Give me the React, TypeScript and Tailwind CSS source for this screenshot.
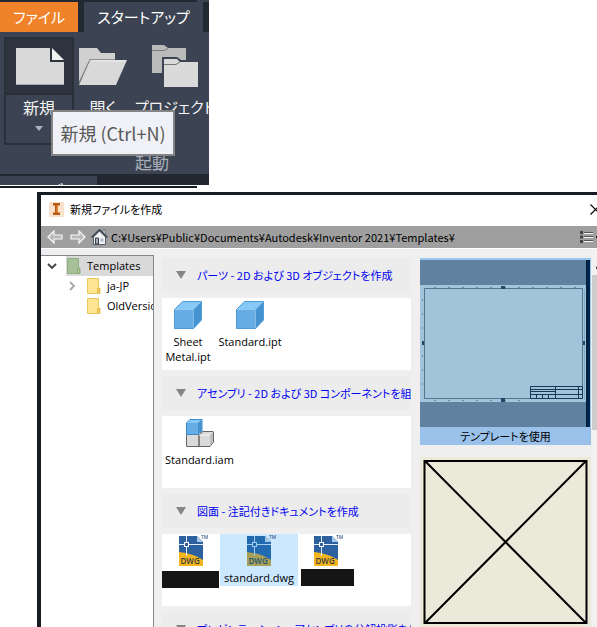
import type { ReactNode } from "react";

const JP = "font-['Noto_Sans_CJK_JP',sans-serif] [font-feature-settings:'palt']";
const LATIN = "font-['Open_Sans','Noto_Sans_CJK_JP',sans-serif]";

function NewIcon() {
  return (
    <svg width="48" height="37" viewBox="0 0 48 37" aria-hidden="true">
      <path d="M0 0H34V14H48V37H0Z" fill="#d9d9d9" />
      <path d="M36 0L48 12H36Z" fill="#f3f3f3" />
      <path d="M0 36.5H48" stroke="#ababab" />
    </svg>
  );
}

function OpenIcon() {
  return (
    <svg width="48" height="37" viewBox="0 0 48 37" aria-hidden="true">
      <path d="M0 0H18L22 5H36V11H11L0 34Z" fill="#d0d0d0" />
      <path d="M11 12H48L37 37H0Z" fill="#d9d9d9" />
      <path d="M36 11.5H11L0 35" fill="none" stroke="#8b8e92" />
      <path d="M12 13H47" stroke="#efefef" />
    </svg>
  );
}

function ProjectIcon() {
  return (
    <svg width="46" height="42" viewBox="0 0 46 42" aria-hidden="true">
      <path d="M0 0H12L16 3H34V28H0Z" fill="#bababa" />
      <path d="M0 5.500H12L16 3.500" fill="none" stroke="#777" />
      <path d="M10 12H25L29 15H46V42H10Z" fill="#3c4453" />
      <path d="M12 14H25L28 17H46V42H12Z" fill="#dadada" />
      <path d="M12 19.500H24L28 17" fill="none" stroke="#777" />
    </svg>
  );
}

function Ribbon() {
  return (
    <section className={`relative w-[209px] shrink-0 overflow-hidden bg-[#3c4453] ${JP}`}>
      <div className="h-[2px] w-[197px] bg-[#222831]" />
      <nav className="flex h-[30px] bg-[#222831] text-[15px] leading-[30px] text-white">
        <button className="w-[78px] bg-[#f08229] text-center">ファイル</button>
        <button className="ml-[6px] w-[119px] bg-[#3c4453] text-center">スタートアップ</button>
      </nav>
      <div className="flex h-[120px] pt-[5px] text-[16px] text-[#f5f5f5]">
        <button className="ml-[4px] flex h-[108px] w-[70px] shrink-0 flex-col items-center border-2 border-[#29303a]">
          <span className="flex h-[56px] w-full items-center justify-center border-b-2 border-[#29303a] bg-[#2d343f] pl-[2px]">
            <NewIcon />
          </span>
          <span className="leading-[24px]">新規</span>
          <svg className="mt-[7px]" width="8" height="5" aria-hidden="true">
            <path d="M0 0H8L4 5Z" fill="#a9b5c3" />
          </svg>
        </button>
        <button className="ml-[5px] flex w-[48px] shrink-0 flex-col items-center pt-[11px]">
          <OpenIcon />
          <span className="mt-[10px] leading-[24px]">開く</span>
        </button>
        <button className="ml-[8px] flex w-[80px] shrink-0 flex-col items-center pt-[8px] text-[15px]">
          <ProjectIcon />
          <span className="mt-[8px] whitespace-nowrap leading-[24px]">プロジェクト</span>
        </button>
      </div>
      <div className="h-[22px] pl-[95px] text-center text-[17px] leading-[20px] text-[#a9afb9]">起動</div>
      <div className="h-[11px] overflow-hidden bg-[#222831] pt-[2px]">
        <div className="h-full w-[97px] overflow-hidden bg-[#3c4453] pl-[16px] pt-[4px] text-center text-[16px] leading-[16px] text-white">
          ベ
        </div>
      </div>
      <div
        role="tooltip"
        className={`absolute left-[51px] top-[110px] flex h-[46px] w-[124px] items-center justify-center whitespace-nowrap border-2 border-[#848484] bg-[#f0f1f6] text-[18px] text-[#595959] ${JP}`}
      >
        新規 (Ctrl+N)
      </div>
    </section>
  );
}

function Arrow({ flip = false }: { flip?: boolean }) {
  return (
    <svg width="16" height="16" viewBox="0 0 16 16" className={flip ? "-scale-x-100" : ""} aria-hidden="true">
      <path d="M1 8L7 2V6H15V10H7V14Z" fill="#b9b9b9" stroke="#f7f7f7" strokeWidth="1.2" />
    </svg>
  );
}

function Home() {
  return (
    <svg width="17" height="16" viewBox="0 0 17 16" aria-hidden="true">
      <path d="M2.500 8V15.500H14.500V8L8.500 2Z" fill="#f1f3f7" stroke="#555d68" />
      <path d="M12 1H14V6L12 4Z" fill="#fff" stroke="#555d68" strokeWidth=".8" />
      <path d="M.5 8.500L8.500 .8L16.500 8.500" fill="none" stroke="#39414d" strokeWidth="1.500" />
      <path d="M4.500 15V9H7.500V15Z" fill="#a5adb9" stroke="#39414d" />
      <path d="M9.500 9.500H12.500V12.500H9.500Z" fill="#abb5c2" />
    </svg>
  );
}

function Folder({ selected = false }: { selected?: boolean }) {
  return (
    <svg width="14" height="16" viewBox="0 0 14 16" className="shrink-0" aria-hidden="true">
      <path
        d="M.5 .5H11.500V9L13 10.500V15.500H.5Z"
        fill={selected ? "#a7c09a" : "#ffe591"}
        stroke={selected ? "#90ae82" : "#e7c75f"}
      />
      <path d="M10.500 15V10.500H12.500V15" fill={selected ? "#b5c799" : "#ffd968"} stroke={selected ? "#91ad72" : "#dfb847"} />
    </svg>
  );
}

function Tree() {
  return (
    <aside className={`w-[113px] shrink-0 overflow-hidden border-r border-t border-[#828790] bg-white text-[11px] text-black ${LATIN}`}>
      <button className="flex h-[20px] w-full items-center">
        <svg className="ml-[6px] mr-[9px] shrink-0" width="10" height="8" aria-hidden="true">
          <path d="M1 2L5 6L9 2" fill="none" stroke="#404040" strokeWidth="1.800" />
        </svg>
        <span className="flex h-full flex-1 items-center bg-[#d9d9d9] pl-px">
          <Folder selected />
          <span className="ml-[6px]">Templates</span>
        </span>
      </button>
      <button className="flex h-[20px] w-full items-center pl-[28px]">
        <svg className="shrink-0" width="7" height="10" aria-hidden="true">
          <path d="M1 1L5 5L1 9" fill="none" stroke="#a6a6a6" strokeWidth="1.800" />
        </svg>
        <span className="ml-[11px] flex items-center">
          <Folder />
          <span className="ml-[6px]">ja-JP</span>
        </span>
      </button>
      <button className="flex h-[20px] w-full items-center whitespace-nowrap pl-[46px]">
        <Folder />
        <span className="ml-[6px]">OldVersions</span>
      </button>
    </aside>
  );
}

function PartIcon() {
  return (
    <svg width="28" height="28" viewBox="0 0 28 28" className="shrink-0" aria-hidden="true">
      <path d="M.5 8.500L8.500 .5H27.500L19.500 8.500Z" fill="#86c8f8" />
      <path d="M19.500 8.500L27.500 .5V19L19.500 27.500Z" fill="#4492cf" />
      <path d="M.5 8.500H19.500V27.500H.5Z" fill="#67ade5" />
      <path d="M.5 8.500L8.500 .5H27.500V19L19.500 27.500H.5Z" fill="none" stroke="#4f9dd8" />
    </svg>
  );
}

function AssemblyIcon() {
  return (
    <svg width="28" height="28" viewBox="0 0 28 28" className="shrink-0" aria-hidden="true">
      <path d="M.5 15.500H13V27.500H.5ZM13 16L17 12.500H27.500V23L24 27.500H13Z" fill="#dadada" stroke="#666" />
      <path d="M13 16H24L27.500 12.500" fill="none" stroke="#f5f5f5" />
      <path d="M24 16L27 13V23L24 27Z" fill="#bdbdbd" />
      <path d="M.5 4L4 .5H16V12L12 15.500H.5Z" fill="#67ade5" stroke="#3988c7" />
      <path d="M1 4L4 1H15.500L12 4Z" fill="#86c8f8" />
      <path d="M12 4L15.500 1V12L12 15Z" fill="#4492cf" />
    </svg>
  );
}

function DwgIcon({ selected = false }: { selected?: boolean }) {
  return (
    <svg width="30" height="32" viewBox="0 0 30 32" className={`shrink-0 ${LATIN}`} aria-hidden="true">
      <path d="M1 2H19L25 8V26H1Z" fill={selected ? "#226bb0" : "#2c609f"} />
      <path d="M19 2L25 8H19Z" fill="#a6c8e8" />
      <path d="M1 18C10 19 17 21 25 26V32H1Z" fill={selected ? "#a89f59" : "#f5b51f"} />
      <path d="M8.500 2V8M8.500 13V22M1 10.500H6M11 10.500H25" stroke={selected ? "#a4cdef" : "#e2edf8"} />
      <rect x="6.500" y="8.500" width="4" height="4" fill="none" stroke={selected ? "#a4cdef" : "#fff"} />
      <text x="2.500" y="30" fontSize="8" fontWeight="600" fill={selected ? "#245970" : "#3c4041"}>DWG</text>
      <text x="23" y="4.500" fontSize="5" fontWeight="600" fill="#35628f">TM</text>
    </svg>
  );
}

function Group({ title, children }: { title: string; children?: ReactNode }) {
  return (
    <section className="mb-[6px]">
      <button className={`flex h-[34px] w-full items-center overflow-hidden whitespace-nowrap bg-[#ececec] pl-[14px] text-[11px] text-[#0000f0] ${JP}`}>
        <svg className="mr-[11px] shrink-0" width="10" height="8" aria-hidden="true">
          <path d="M0 0H10L5 8Z" fill="#858585" />
        </svg>
        {title}
      </button>
      <div className="mt-[6px] flex h-[72px] items-start overflow-hidden bg-white">{children}</div>
    </section>
  );
}

function FileTile({ icon, label, className }: { icon: ReactNode; label: string; className: string }) {
  return (
    <button className={`flex shrink-0 flex-col items-center pt-[3px] text-center text-[11px] leading-[15px] text-black ${LATIN} ${className}`}>
      {icon}
      <span className="mt-[5px]">{label}</span>
    </button>
  );
}

function Drawing() {
  return (
    <svg className="block h-[167px] w-full" viewBox="0 0 171 167" preserveAspectRatio="none" aria-hidden="true">
      <path d="M0 0H171V167H0Z" fill="#6081a0" />
      <path d="M0 25H166V142H0Z" fill="#a1c4d8" />
      <path d="M166 0H170V167H166Z" fill="#002448" />
      <path d="M170 0H171V167H170Z" fill="#99c6ef" />
      <path d="M4.500 28.500H162.500V138.500H4.500Z" fill="none" stroke="#55748f" />
      <path d="M164.500 29V140" stroke="#8aabc1" />
      <path d="M14 27.500H161M14 140.500H109M2.500 39V130" fill="none" stroke="#658ba5" strokeDasharray="2 12" />
      <path d="M81 26H85V29H81ZM81 138H85V142H81ZM2 81H4V85H2ZM163 81H165V85H163Z" fill="#234666" />
      <path
        d="M110.500 126.500H162.500V138.500H110.500ZM110 129.500H162M110 131.500H135M110 134.500H162M135.500 126V138M158.500 126V138M116.500 134V138M122.500 134V138M128.500 134V138"
        fill="none"
        stroke="#173955"
      />
    </svg>
  );
}

function Previews() {
  return (
    <div className={`ml-[9px] flex w-[171px] shrink-0 flex-col pt-[9px] ${JP}`}>
      <button className="shrink-0 border-t-2 border-[#99c6ef] bg-[#99c1e9] text-center text-[11px] leading-[18px] text-black">
        <Drawing />
        テンプレートを使用
      </button>
      <button className="mt-[12px] h-[170px] shrink-0 bg-[#ebe9da]" aria-label="プレビュー">
        <svg className="h-full w-full" viewBox="0 0 171 170" preserveAspectRatio="none" aria-hidden="true">
          <path d="M4.500 4H166.500V166H4.500Z M5 4L166 166M166 4L5 166" fill="none" stroke="#000" strokeWidth="2" />
        </svg>
      </button>
    </div>
  );
}

function Dialog() {
  return (
    <main className="ml-[37px] mt-[4px] flex min-h-0 flex-1 flex-col overflow-hidden border-l-4 border-t-[3px] border-[#171b23] bg-[#efefef]">
      <header className={`flex h-[31px] shrink-0 items-center bg-white pb-[2px] pl-[8px] text-[11px] text-black ${JP}`}>
        <svg className="mr-[6px]" width="15" height="15" viewBox="0 0 15 15" aria-hidden="true">
          <path d="M0 0H15V15H0Z" fill="#fae1cc" />
          <path d="M4 1H11V3.500H9V10.500H11V13H4V10.500H6V3.500H4Z" fill="#b45a12" />
          <path d="M7.500 3.500H9V10.500H7.500Z" fill="#e38639" />
        </svg>
        <h1>新規ファイルを作成</h1>
        <button className="-mr-[4px] ml-auto" aria-label="閉じる">
          <svg width="11" height="11" aria-hidden="true">
            <path d="M.5 .5L10.500 10.500M10.500 .5L.5 10.500" stroke="#000" strokeWidth="1.200" />
          </svg>
        </button>
      </header>
      <div className="flex h-[23px] shrink-0 items-center border-b border-white bg-[#9f9f9f] pl-[6px]">
        <button aria-label="戻る"><Arrow /></button>
        <button className="ml-[7px]" aria-label="進む"><Arrow flip /></button>
        <button className="ml-[5px]" aria-label="ホーム"><Home /></button>
        <span className={`ml-[3px] whitespace-nowrap text-[11px] text-black ${JP}`}>
          C:¥Users¥Public¥Documents¥Autodesk¥Inventor 2021¥Templates¥
        </span>
        <button className="ml-auto flex items-center" aria-label="表示">
          <svg width="17" height="12" aria-hidden="true">
            <path d="M0 0H3V3H0ZM0 4.500H3V7.500H0ZM0 9H3V12H0Z" fill="#444" />
            <path d="M4 2.500H13M4 6.500H13M4 10.500H13" stroke="#f5f5f5" />
            <path d="M4 1.500H13M4 5.500H13M4 9.500H13" stroke="#555" />
            <path d="M16 5H17V7H16Z" fill="#111" />
          </svg>
        </button>
      </div>
      <div className="flex min-h-0 flex-1">
        <div className="flex pt-[6px]"><Tree /></div>
        <div className="ml-[8px] min-w-0 flex-1 overflow-hidden pt-[9px]">
          <Group title="パーツ - 2D および 3D オブジェクトを作成">
            <FileTile className="w-[52px]" icon={<PartIcon />} label="Sheet Metal.ipt" />
            <FileTile className="w-[72px]" icon={<PartIcon />} label="Standard.ipt" />
          </Group>
          <Group title="アセンブリ - 2D および 3D コンポーネントを組み立て">
            <FileTile className="w-[75px]" icon={<AssemblyIcon />} label="Standard.iam" />
          </Group>
          <Group title="図面 - 注記付きドキュメントを作成">
            <div className="flex w-[57px] shrink-0 flex-col items-end">
              <span className="pr-[11px]"><DwgIcon /></span>
              <span className="mt-[5px] h-[17px] w-full bg-[#151515]" />
            </div>
            <button className={`ml-[1px] flex h-[52px] w-[78px] shrink-0 flex-col items-center bg-[#cce8ff] text-[11px] leading-[15px] text-black ${LATIN}`}>
              <span className="pl-[4px]"><DwgIcon selected /></span>
              <span className="mt-[4px]">standard.dwg</span>
            </button>
            <div className="ml-[3px] flex w-[53px] shrink-0 flex-col items-center">
              <DwgIcon />
              <span className="mt-[3px] h-[17px] w-full bg-[#151515]" />
            </div>
          </Group>
          <Group title="プレゼンテーション - アセンブリの分解投影を作成" />
        </div>
        <Previews />
        <div className="ml-px w-[5px] shrink-0 overflow-hidden bg-[#f1f1f1] pt-[9px]">
          <svg className="h-[17px] w-[5px]" viewBox="0 0 5 17" aria-hidden="true">
            <path d="M4 9L5 8V11H4Z" fill="#444" />
          </svg>
          <div className="h-[155px] bg-[#cdcdcd]" />
        </div>
      </div>
    </main>
  );
}

export default function App() {
  return (
    <div className="flex h-screen flex-col overflow-hidden bg-white">
      <Ribbon />
      <div className="mt-px h-[2px] w-[197px] shrink-0 bg-[#171b23]" />
      <Dialog />
    </div>
  );
}
